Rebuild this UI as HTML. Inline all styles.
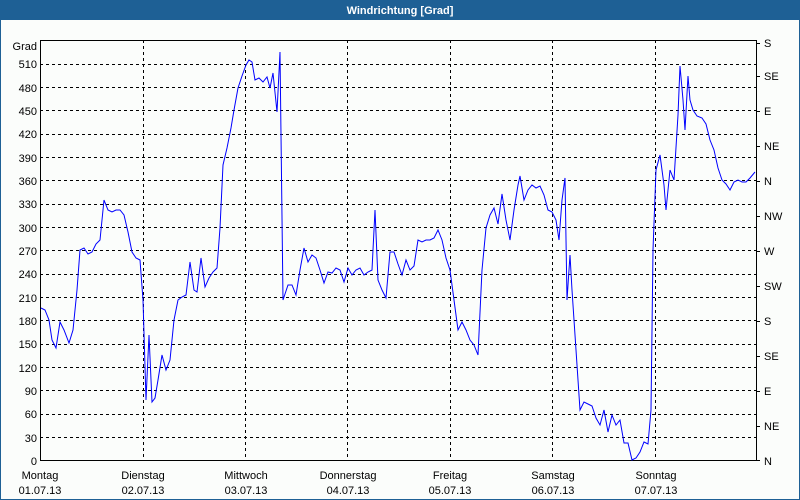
<!DOCTYPE html>
<html><head><style>
body{margin:0;background:#fbfdfb}
svg{display:block;font-family:"Liberation Sans",sans-serif;font-size:11px}
</style></head><body>
<svg width="800" height="500" xmlns="http://www.w3.org/2000/svg">
<rect x="0" y="0" width="800" height="500" fill="#fbfdfb"/>
<rect x="0" y="0" width="800" height="20" fill="#1e6095"/>
<rect x="0.5" y="0.5" width="799" height="499" fill="none" stroke="#1e6095"/>
<text x="400" y="14" fill="#fff" font-weight="bold" text-anchor="middle">Windrichtung [Grad]</text>
<g stroke="#000" stroke-dasharray="3,3" stroke-width="1">
<path d="M40 64.5H760M40 87.5H760M40 110.5H760M40 134.5H760M40 157.5H760M40 180.5H760M40 204.5H760M40 227.5H760M40 250.5H760M40 274.5H760M40 297.5H760M40 320.5H760M40 344.5H760M40 367.5H760M40 390.5H760M40 414.5H760M40 437.5H760"/>
<path d="M143.5 40V460M245.5 40V460M347.5 40V460M450.5 40V460M552.5 40V460M655.5 40V460"/>
</g>
<rect x="40.5" y="40.5" width="716" height="420" fill="none" stroke="#000"/>
<g stroke="#000"><path d="M756 43.5h4M756 76.5h4M756 111.5h4M756 146.5h4M756 181.5h4M756 216.5h4M756 251.5h4M756 286.5h4M756 321.5h4M756 356.5h4M756 391.5h4M756 426.5h4M756 460.5h4"/></g>
<g text-anchor="end">
<text x="37" y="50">Grad</text>
<text x="37" y="68">510</text><text x="37" y="92">480</text><text x="37" y="115">450</text><text x="37" y="138">420</text><text x="37" y="162">390</text><text x="37" y="185">360</text><text x="37" y="208">330</text><text x="37" y="232">300</text><text x="37" y="255">270</text><text x="37" y="278">240</text><text x="37" y="302">210</text><text x="37" y="325">180</text><text x="37" y="348">150</text><text x="37" y="372">120</text><text x="37" y="395">90</text><text x="37" y="418">60</text><text x="37" y="442">30</text><text x="37" y="465">0</text>
</g>
<g>
<text x="764" y="47">S</text><text x="764" y="80">SE</text><text x="764" y="115">E</text><text x="764" y="150">NE</text><text x="764" y="185">N</text><text x="764" y="220">NW</text><text x="764" y="255">W</text><text x="764" y="290">SW</text><text x="764" y="325">S</text><text x="764" y="360">SE</text><text x="764" y="395">E</text><text x="764" y="430">NE</text><text x="764" y="465">N</text>
</g>
<g text-anchor="middle">
<text x="40" y="479">Montag</text><text x="40" y="494">01.07.13</text>
<text x="143" y="479">Dienstag</text><text x="143" y="494">02.07.13</text>
<text x="246" y="479">Mittwoch</text><text x="246" y="494">03.07.13</text>
<text x="348" y="479">Donnerstag</text><text x="348" y="494">04.07.13</text>
<text x="450" y="479">Freitag</text><text x="450" y="494">05.07.13</text>
<text x="553" y="479">Samstag</text><text x="553" y="494">06.07.13</text>
<text x="656" y="479">Sonntag</text><text x="656" y="494">07.07.13</text>
</g>
<polyline fill="none" stroke="#0000ff" stroke-width="1" points="41,308 45,310 49,320 52,340 56,348 60,322 64,330 69,343 73,330 77,290 80,250 84,248 88,254 92,252 96,244 100,240 104,200 108,210 112,212 116,210 120,210 124,215 128,232 132,252 136,258 140,260 143,300 146,400 149,335 152,402 155,398 158,380 162,355 166,370 170,360 174,320 178,300 182,297 186,295 190,262 194,290 197,292 201,258 205,287 209,278 213,272 217,268 220,228 223,165 227,148 231,128 234,110 238,88 242,76 246,65 249,60 252,62 255,80 259,78 263,82 267,77 270,88 273,73 277,112 280,52 283,300 288,285 292,285 296,295 300,270 304,248 308,262 312,255 316,258 320,270 324,283 328,272 332,273 336,268 340,270 344,282 348,268 352,275 356,270 360,268 364,275 368,272 372,270 375,210 378,280 382,290 386,298 390,252 394,252 398,264 402,275 406,260 410,270 414,266 418,240 422,242 426,240 430,240 434,238 438,230 442,240 446,258 450,270 454,300 458,330 462,322 466,330 470,340 474,345 478,355 482,270 486,228 490,215 494,208 498,224 502,194 506,220 510,240 514,210 518,185 520,176 524,200 528,190 532,185 536,188 540,186 544,195 548,210 552,212 556,220 559,240 562,200 565,178 567,300 570,255 572,290 576,350 580,410 584,402 588,404 592,406 596,418 600,425 604,410 608,432 612,415 616,425 620,420 624,443 628,443 632,460 636,458 640,452 644,442 648,444 651,410 653,250 656,170 660,155 664,185 666,210 670,170 674,180 678,115 680,66 683,100 685,130 688,76 690,100 693,110 697,116 702,118 706,124 710,140 714,150 718,168 722,180 726,184 730,190 734,182 738,180 742,182 746,182 750,178 755,172"/>
</svg>
</body></html>
